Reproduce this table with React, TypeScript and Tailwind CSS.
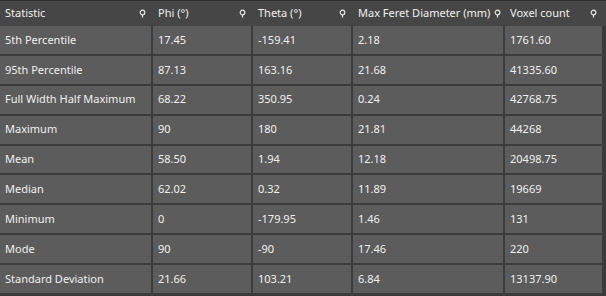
import React from "react";

const headers = ["Statistic", "Phi (°)", "Theta (°)", "Max Feret Diameter (mm)", "Voxel count"];
const rows: string[][] = [
  ["5th Percentile", "17.45", "-159.41", "2.18", "1761.60"],
  ["95th Percentile", "87.13", "163.16", "21.68", "41335.60"],
  ["Full Width Half Maximum", "68.22", "350.95", "0.24", "42768.75"],
  ["Maximum", "90", "180", "21.81", "44268"],
  ["Mean", "58.50", "1.94", "12.18", "20498.75"],
  ["Median", "62.02", "0.32", "11.89", "19669"],
  ["Minimum", "0", "-179.95", "1.46", "131"],
  ["Mode", "90", "-90", "17.46", "220"],
  ["Standard Deviation", "21.66", "103.21", "6.84", "13137.90"],
];

function SortIcon() {
  return (
    <svg width="7" height="9" viewBox="0 0 7 9" className="shrink-0">
      <circle cx="3.5" cy="3.5" r="2.3" fill="none" stroke="#e6e6e6" strokeWidth="1.2" />
      <line x1="3.5" y1="5.8" x2="3.5" y2="8.5" stroke="#e6e6e6" strokeWidth="1.2" />
    </svg>
  );
}

export default function App() {
  const cols = "grid grid-cols-[153px_100px_100px_152px_99px]";
  return (
    <div
      className="w-[606px] h-[296px] bg-[#3a3a3a] overflow-hidden text-[11px] text-[#f0f0f0]"
      style={{ fontFamily: '"Noto Sans", "Open Sans", sans-serif' }}
    >
      <div className={`${cols} h-[26px] bg-[#464646] border-t border-[#303030]`}>
        {headers.map((h, i) => (
          <div key={i} className="flex items-center justify-between pl-[5px] pr-[7px] gap-1">
            <span className="whitespace-nowrap">{h}</span>
            <SortIcon />
          </div>
        ))}
      </div>
      {rows.map((r, ri) => (
        <div key={ri} className={`${cols} h-[29.9px]`}>
          {r.map((c, ci) => (
            <div
              key={ci}
              className="flex items-center pl-[5px] bg-[#5c5c5c] border-b-2 border-r-2 border-[#3c3c3c] whitespace-nowrap"
            >
              {c}
            </div>
          ))}
        </div>
      ))}
    </div>
  );
}
